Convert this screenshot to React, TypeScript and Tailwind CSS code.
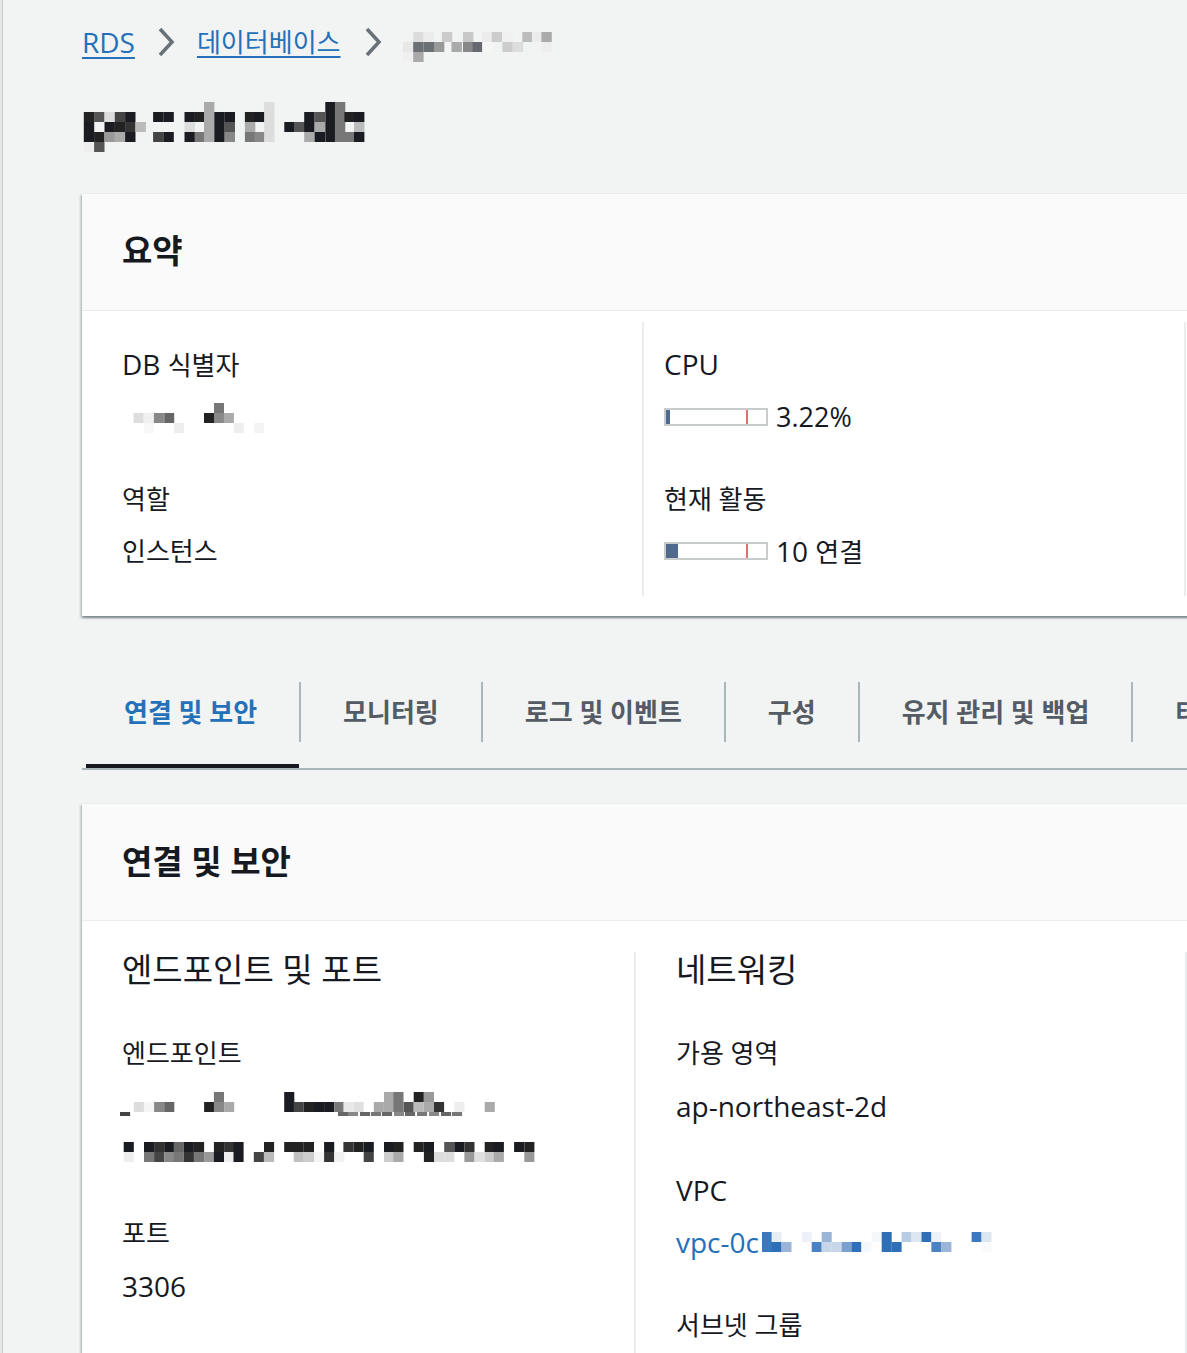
import React from "react";

type Cell = [number, number, string, number?];

function Mosaic({ width, height, cells, bw = 10.4, bh = 10 }: { width: number; height: number; cells: Cell[]; bw?: number; bh?: number }) {
  return (
    <svg width={width} height={height} viewBox={`0 0 ${width} ${height}`} className="block shrink-0 overflow-visible">
      {cells.map(([x, y, c, h], i) => (
        <rect key={i} x={x} y={y} width={bw} height={h ?? bh} fill={c} />
      ))}
    </svg>
  );
}

const D = "#1a1c22";

const crumbCells: Cell[] = [
  [11.2, 8, "#dcdcdc"], [21.6, 8, "#ececec"], [39.9, 8, "#cbcbcb"], [61, 8, "#c8c8c8"], [80.1, 8, "#ececec"],
  [89.7, 8, "#cccccc"], [100.4, 8, "#f0f0f0"], [120.3, 8, "#bbbbbb"], [129.9, 8, "#ececec"], [139.4, 8, "#aaaaaa"],
  [0.9, 18, "#e8e8e8"], [11.2, 18, "#6b7075"], [21.6, 18, "#6b7075"], [31.9, 18, "#999999"], [49.5, 18, "#aaaaaa"],
  [61, 18, "#888888"], [70.6, 18, "#666a70"], [80.1, 18, "#f5f5f5"], [100.4, 18, "#cccccc"], [110.7, 18, "#dddddd"],
  [139.4, 18, "#eeeeee"],
  [0.9, 28, "#f0f0f0"], [11.2, 28, "#aaaaaa"],
];

const t = (x: number, r: number, c: string): Cell => [x, 2 + r * 10, c];
const titleCells: Cell[] = [
  t(122, 0, "#aaaaaa"), t(182.1, 0, "#dddddd"), t(243.3, 0, D), t(252.9, 0, "#777777"),
  t(1.8, 1, "#222"), t(12.1, 1, "#555"), t(22.5, 1, "#ddd"), t(32.8, 1, "#444"), t(43.1, 1, D), t(71.1, 1, D),
  t(81.4, 1, D), t(102.5, 1, D), t(112.8, 1, "#222"), t(122, 1, "#aaa"), t(132.3, 1, D), t(142.6, 1, D),
  t(162.9, 1, "#222"), t(172.5, 1, D), t(182.1, 1, "#ddd"), t(222.2, 1, D), t(232.6, 1, "#555"), t(243.3, 1, D),
  t(252.9, 1, "#777"), t(262.4, 1, "#222"), t(272, 1, D),
  t(1.8, 2, D), t(22.5, 2, D), t(32.8, 2, "#222"), t(43.1, 2, "#333"), t(53.5, 2, "#bbb"), t(102.5, 2, "#ddd"),
  t(122, 2, "#aaa"), t(132.3, 2, D), t(142.6, 2, "#555"), t(162.9, 2, "#aaa"), t(182.1, 2, "#ddd"), t(202.3, 2, D),
  t(212.7, 2, "#555"), t(222.2, 2, D), t(232.6, 2, "#aaa"), t(243.3, 2, D), t(252.9, 2, "#777"), t(272, 2, "#bbb"),
  t(1.8, 3, D), t(12.1, 3, "#222"), t(22.5, 3, "#999"), t(32.8, 3, "#aaa"), t(43.1, 3, D), t(71.1, 3, "#444"),
  t(81.4, 3, D), t(102.5, 3, D), t(112.8, 3, "#777"), t(122, 3, "#aaa"), t(132.3, 3, D), t(142.6, 3, "#888"),
  t(162.9, 3, "#777"), t(172.5, 3, "#888"), t(182.1, 3, "#ddd"), t(222.2, 3, "#aaa"), t(232.6, 3, D), t(243.3, 3, D),
  t(252.9, 3, "#777"), t(262.4, 3, "#777"), t(272, 3, D),
  t(1.8, 4, "#eee"), t(12.1, 4, "#555"),
];

const idCells: Cell[] = [
  [92, 4, "#777"],
  [11.6, 14, "#ddd"], [21.9, 14, "#f0f0f0"], [31.9, 14, "#888"], [42.2, 14, "#666"], [82, 14, "#222"], [92, 14, "#888"], [101.9, 14, "#aaa"],
  [21.9, 24, "#f8f8f8"], [52.1, 24, "#eee"], [111.8, 24, "#eee"], [132.1, 24, "#f4f4f4"],
];

const e = (x: number, y: number, c: string): Cell => [x, y, c];
const endpointCells: Cell[] = [
  e(91.9, 4, "#777"), e(162.2, 4, D), e(262, 4, "#aaa"), e(271.4, 4, "#777"), e(291.7, 4, "#222"), e(301.9, 4, "#999"),
  e(11.8, 14, "#ddd"), e(22, 14, "#f5f5f5"), e(32.1, 14, "#888"), e(42.2, 14, "#666"), e(82.1, 14, "#222"), e(91.9, 14, "#888"),
  e(102.1, 14, "#aaa"), e(162.2, 14, D), e(171.7, 14, "#444"), e(181.9, 14, "#222"), e(192, 14, D), e(202.1, 14, D),
  e(212.3, 14, "#777"), e(221.4, 14, "#e8e8e8"), e(231.5, 14, "#e0e0e0"), e(251.8, 14, "#aaa"), e(262, 14, "#aaa"),
  e(271.4, 14, "#777"), e(281.6, 14, "#555"), e(291.7, 14, "#bbb"), e(301.9, 14, "#aaa"), e(312, 14, "#333"),
  e(332.3, 14, "#eee"), e(362.7, 14, "#aaa"),
  e(1.7, 54, D), e(22, 54, D), e(32.1, 54, "#333"), e(42.2, 54, D), e(51.7, 54, "#666"), e(61.8, 54, D), e(72, 54, "#222"),
  e(91.9, 54, "#222"), e(102.1, 54, "#333"), e(111.5, 54, D), e(142, 54, "#222"), e(162.2, 54, "#222"), e(171.7, 54, "#222"),
  e(181.9, 54, "#222"), e(202.1, 54, D), e(221.4, 54, "#333"), e(231.5, 54, "#222"), e(241.7, 54, D), e(262, 54, D),
  e(271.4, 54, "#222"), e(291.7, 54, "#222"), e(301.9, 54, D), e(322.2, 54, "#555"), e(332.3, 54, D), e(342.4, 54, "#333"),
  e(362.7, 54, "#222"), e(371.8, 54, D), e(392.1, 54, D), e(402.3, 54, "#222"),
  e(1.7, 64, "#eee"), e(22, 64, "#777"), e(32.1, 64, "#444"), e(42.2, 64, "#888"), e(51.7, 64, "#777"), e(61.8, 64, "#333"),
  e(72, 64, "#777"), e(82.1, 64, "#999"), e(91.9, 64, D), e(102.1, 64, "#eee"), e(111.5, 64, D), e(131.8, 64, "#444"),
  e(142, 64, "#bbb"), e(171.7, 64, "#c0c0c0"), e(181.9, 64, "#ccc"), e(192, 64, "#f5f5f5"), e(202.1, 64, "#333"),
  e(212.3, 64, "#f0f0f0"), e(241.7, 64, "#444"), e(262, 64, "#ccc"), e(271.4, 64, "#aaa"), e(301.9, 64, "#222"),
  e(312, 64, "#ddd"), e(322.2, 64, "#ddd"), e(342.4, 64, "#999"), e(352.6, 64, "#e0e0e0"), e(362.7, 64, "#ccc"),
  e(371.8, 64, "#aaa"), e(402.3, 64, "#999"),
];

// thin bottoms of the partly hidden host name under the first mosaic row
const endpointTail: Cell[] = [
  [-2, 24, "#444", 4], [216, 24, "#666", 4], [226, 24, "#888", 4], [238, 24, "#666", 4], [249, 24, "#777", 4],
  [260, 24, "#666", 4], [272, 24, "#888", 4], [283, 24, "#666", 4], [295, 24, "#777", 4], [307, 24, "#888", 4],
  [319, 24, "#666", 4], [330, 24, "#777", 4],
];

const vpcCells: Cell[] = [
  [0, 8, "#3a78c0"], [9.6, 8, "#e8eef6"], [39.8, 8, "#eef2f8"], [59.7, 8, "#9ab5d8"], [109.7, 8, "#f5f8fb"], [119.7, 8, "#2f6fb8"],
  [139.6, 8, "#b8cce6"], [149.5, 8, "#dde7f2"], [159.5, 8, "#2f6fb8"], [169.4, 8, "#eef2f8"], [209.6, 8, "#3a78c0"], [219.5, 8, "#dde7f2"],
  [0, 18, "#3a78c0"], [9.6, 18, "#2f6fb8"], [19.5, 18, "#9ab5d8"], [49.7, 18, "#4a82c4"], [59.7, 18, "#c8d6ea"], [69.6, 18, "#c8d6ea"],
  [79.6, 18, "#7aa0d0"], [89.5, 18, "#2f6fb8"], [99.4, 18, "#f5f8fb"], [119.7, 18, "#2f6fb8"], [129.6, 18, "#2f6fb8"],
  [169.4, 18, "#4a82c4"], [179.4, 18, "#9ab5d8"], [219.5, 18, "#f8fafc"],
];

function Chevron() {
  return (
    <svg width="18" height="30" viewBox="0 0 18 30" className="shrink-0">
      <polyline points="3,2 15,15 3,28" fill="none" stroke="#687078" strokeWidth="3.5" />
    </svg>
  );
}

function Meter({ fill }: { fill: number }) {
  return (
    <div className="relative w-[104px] h-[18px] border-2 border-[#c9cccc] bg-white shrink-0">
      <div className="absolute left-0 top-0 bottom-0 bg-[#4f6a8c]" style={{ width: fill }} />
      <div className="absolute left-[80px] top-0 bottom-0 w-[2px] bg-[#d4766a]" />
    </div>
  );
}

const KO = "h-[36px] leading-[36px] text-[26px] text-[#16191f] whitespace-nowrap";
const EN = "h-[36px] leading-[36px] text-[28px] text-[#16191f] whitespace-nowrap";
const H2 = "text-[33px] font-bold text-[#16191f]";
const H3 = "h-[36px] leading-[36px] text-[33px] text-[#16191f] whitespace-nowrap";
const CARD = "w-[1200px] bg-white border-t border-[#eaeded] shadow-[0_2px_2px_0_rgba(0,28,36,0.3),2px_2px_2px_0_rgba(0,28,36,0.15),-2px_2px_2px_0_rgba(0,28,36,0.15)]";

const tabs = ["연결 및 보안", "모니터링", "로그 및 이벤트", "구성", "유지 관리 및 백업", "태그"];

export default function App() {
  return (
    <div className="w-[1187px] h-[1353px] overflow-hidden bg-[#f2f3f3] flex font-['Open_Sans','Noto_Sans_CJK_KR',sans-serif]">
      <div className="w-[2px] bg-[#e6e8e8] shrink-0" />
      <div className="w-[1px] bg-[#c4c9c9] shrink-0" />
      <main className="flex-1 overflow-hidden pl-[79px] pt-[24px]">
        {/* breadcrumb */}
        <nav className="flex items-center h-[36px]">
          <a className="text-[28px] leading-[36px] text-[#2471b9] underline decoration-2 underline-offset-[4px]">RDS</a>
          <div className="ml-[22px]"><Chevron /></div>
          <a className="ml-[22px] text-[26px] leading-[36px] text-[#2471b9] underline decoration-2 underline-offset-[4px]">데이터베이스</a>
          <div className="ml-[24px]"><Chevron /></div>
          <div className="ml-[20px]"><Mosaic width={151} height={36} cells={crumbCells} /></div>
        </nav>

        <div className="mt-[40px]">
          <Mosaic width={284} height={52} cells={titleCells} />
        </div>

        {/* summary */}
        <section className={`mt-[41px] ${CARD}`}>
          <div className="h-[117px] bg-[#fafafa] border-b border-[#eaeded] flex items-center pl-[40px] pb-[3px]">
            <h2 className={H2}>요약</h2>
          </div>
          <div className="flex pt-[11px] pb-[20px]">
            <div className="w-[560px] shrink-0 pl-[40px] pt-[24px] h-[274px]">
              <div className={EN}>DB <span className="text-[26px]">식별자</span></div>
              <div className="mt-[17px] h-[36px]"><Mosaic width={150} height={36} cells={idCells} bw={10} /></div>
              <div className={`mt-[46px] ${KO}`}>역할</div>
              <div className={`mt-[16px] ${KO}`}>인스턴스</div>
            </div>
            <div className="w-[2px] bg-[#eaeded] shrink-0" />
            <div className="w-[540px] shrink-0 pl-[20px] pt-[24px]">
              <div className={EN}>CPU</div>
              <div className="mt-[17px] h-[36px] flex items-center gap-[8px]">
                <Meter fill={4} />
                <span className="text-[27px] leading-[36px] text-[#16191f]">3.22%</span>
              </div>
              <div className={`mt-[46px] ${KO}`}>현재 활동</div>
              <div className="mt-[16px] h-[36px] flex items-center gap-[8px]">
                <Meter fill={12} />
                <span className="text-[28px] leading-[36px] text-[#16191f]">10 <span className="text-[26px]">연결</span></span>
              </div>
            </div>
            <div className="w-[2px] bg-[#eaeded] shrink-0" />
          </div>
        </section>

        {/* tabs */}
        <div className="mt-[66px] w-[1200px] h-[88px] border-b-2 border-[#aab7b8] flex items-start">
          {tabs.map((label, i) => (
            <React.Fragment key={label}>
              {i > 0 && <div className="w-[2px] h-[60px] bg-[#aab7b8] shrink-0" />}
              <div className="relative h-[86px] px-[42px] shrink-0">
                <div
                  className={`h-[60px] flex items-center text-[26px] font-bold whitespace-nowrap ${
                    i === 0 ? "text-[#2471b9]" : "text-[#545b64]"
                  }`}
                >
                  {label}
                </div>
                {i === 0 && <div className="absolute left-[4px] right-0 bottom-0 h-[4px] bg-[#16191f]" />}
              </div>
            </React.Fragment>
          ))}
        </div>

        {/* connectivity */}
        <section className={`mt-[33px] ${CARD}`}>
          <div className="h-[117px] bg-[#fafafa] border-b border-[#eaeded] flex items-center pl-[40px] pb-[1px]">
            <h2 className={H2}>연결 및 보안</h2>
          </div>
          <div className="flex pt-[31px]">
            <div className="w-[552px] shrink-0 pl-[40px]">
              <div className={H3}>엔드포인트 및 포트</div>
              <div className={`mt-[47px] ${KO}`}>엔드포인트</div>
              <div className="mt-[17px] h-[78px]">
                <Mosaic width={414} height={78} cells={[...endpointTail, ...endpointCells]} bw={10.1} />
              </div>
              <div className={`mt-[49px] ${KO}`}>포트</div>
              <div className={`mt-[17px] ${EN}`}>3306</div>
              <div className="h-[60px]" />
            </div>
            <div className="w-[2px] bg-[#eaeded] shrink-0" />
            <div className="w-[549px] shrink-0 pl-[40px]">
              <div className={H3}>네트워킹</div>
              <div className={`mt-[47px] ${KO}`}>가용 영역</div>
              <div className={`mt-[17px] ${EN}`}>ap-northeast-2d</div>
              <div className={`mt-[48px] ${EN}`}>VPC</div>
              <div className="mt-[16px] h-[36px] flex items-center">
                <a className="text-[28px] leading-[36px] text-[#2471b9]">vpc-0c</a>
                <div className="ml-[3px]"><Mosaic width={230} height={36} cells={vpcCells} bw={10} /></div>
              </div>
              <div className={`mt-[47px] ${KO}`}>서브넷 그룹</div>
            </div>
            <div className="w-[2px] bg-[#eaeded] shrink-0" />
          </div>
        </section>
      </main>
    </div>
  );
}
